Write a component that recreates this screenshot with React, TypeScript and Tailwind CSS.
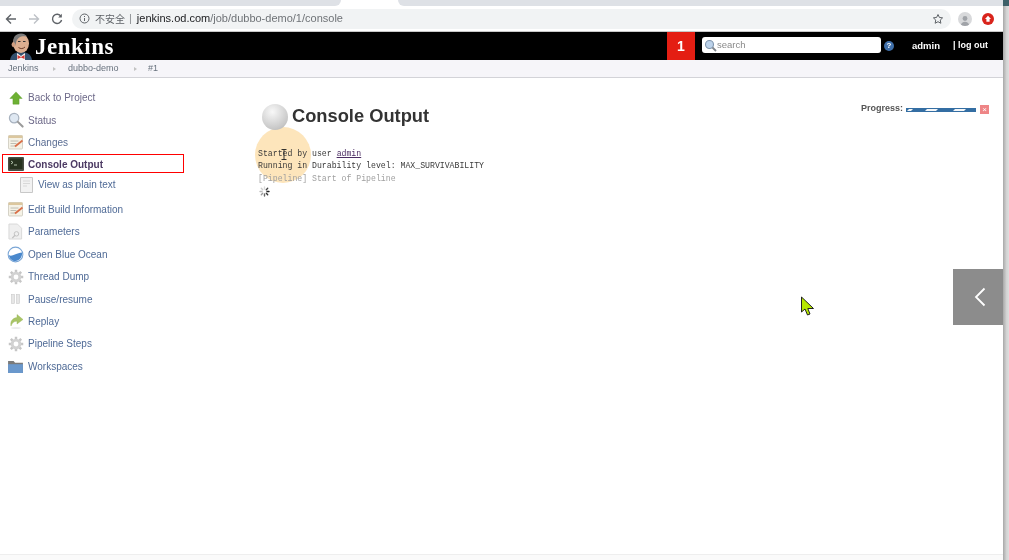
import React from "react";

const Arrow = () => (
  <svg width="14" height="14" viewBox="0 0 16 16"><path d="M8 1 L15 8.5 H11.5 V15 H4.5 V8.5 H1 Z" fill="#6db033" stroke="#5a9a28" strokeWidth="0.5" /></svg>
);
const Search = () => (
  <svg width="16" height="16" viewBox="0 0 17 17"><circle cx="6.5" cy="6.5" r="5" fill="#dfe8f2" stroke="#a8b2bf" strokeWidth="1.3" /><path d="M10.5 10.5 L15.5 15.5" stroke="#9a9a9a" strokeWidth="2.2" strokeLinecap="round" /></svg>
);
const Notepad = () => (
  <svg width="16" height="16" viewBox="0 0 16 16"><rect x="0.5" y="1.5" width="14" height="13.5" rx="1" fill="#f5f2e6" stroke="#c4c1b5" strokeWidth="0.7" /><rect x="0.5" y="1.5" width="14" height="2.5" fill="#dcc79e" /><path d="M2.5 7h8M2.5 9.5h6M2.5 12h5" stroke="#b0b0a6" strokeWidth="0.8" /><path d="M7 12.5 L14.5 6.5" stroke="#d96f48" strokeWidth="1.8" /></svg>
);
const Terminal = () => (
  <svg width="16" height="14" viewBox="0 0 16 14"><rect x="0" y="0" width="16" height="14" rx="1" fill="#4a4e44" /><rect x="1.5" y="1.5" width="13" height="10.5" fill="#27321f" /><path d="M3 4l2 1.5L3 7M6 8h3" stroke="#d8e8d0" strokeWidth="0.8" fill="none" /></svg>
);
const Doc = () => (
  <svg width="13" height="16" viewBox="0 0 13 16"><path d="M0.5 0.5 H12.5 V15.5 H0.5 Z" fill="#f2f2f2" stroke="#c8c8c8" /><path d="M3 4h7M3 6.5h7M3 9h4" stroke="#d8d8d8" strokeWidth="1" /></svg>
);
const Params = () => (
  <svg width="15" height="17" viewBox="0 0 16 17"><path d="M1 0.5 H10 L14.5 5 V16.5 H1 Z" fill="#efefef" stroke="#d8d8d8" /><circle cx="9" cy="11" r="2.4" fill="none" stroke="#c0c0c0" strokeWidth="1" /><path d="M7.5 12.5 L4.5 15.5" stroke="#c0c0c0" strokeWidth="1.3" /></svg>
);
const Ocean = () => (
  <svg className="-ml-[1px]" width="17" height="17" viewBox="0 0 18 18"><circle cx="9" cy="9" r="7.8" fill="#fff" stroke="#7aa6d6" strokeWidth="1.1" /><path d="M2 9.5 C5 12 9 7.5 16 7 C16.4 12 13 16 9 16 C5 16 2.4 13 2 9.5 Z" fill="#4a88cc" /></svg>
);
const Gear = () => (
  <svg width="16" height="16" viewBox="0 0 17 17"><g stroke="#c6c6c6" strokeWidth="2.6"><path d="M8.5 0.8V16.2M0.8 8.5H16.2M3 3L14 14M14 3L3 14" /></g><circle cx="8.5" cy="8.5" r="5.6" fill="#d2d2d2" /><circle cx="8.5" cy="8.5" r="2.6" fill="#fff" /></svg>
);
const Pause = () => (
  <svg width="16" height="16" viewBox="0 0 16 16"><rect x="3.5" y="3.5" width="3" height="9" fill="#e6e6e6" stroke="#cacaca" strokeWidth="0.6" /><rect x="8.5" y="3.5" width="3" height="9" fill="#e6e6e6" stroke="#cacaca" strokeWidth="0.6" /></svg>
);
const Replay = () => (
  <svg width="16" height="16" viewBox="0 0 16 16"><path d="M9 1.5 L15 6.5 L9 11 V8.2 C6 8 4 10 3 13 C2 8.5 4.5 5 9 4.6 Z" fill="#a9c566" stroke="#98b259" strokeWidth="0.4" /><ellipse cx="8" cy="15" rx="5" ry="0.8" fill="#e6e6e6" /></svg>
);
const Folder = () => (
  <svg width="15" height="13" viewBox="0 0 16 14"><path d="M0 1 H6 L7.5 3 H16 V14 H0 Z" fill="#7a7a7a" /><path d="M0 4.5 H16 V14 H0 Z" fill="#6a98cc" /></svg>
);

type Item = { label: string; icon: React.ReactNode; cls: string; text: string };
const items: Item[] = [
  { label: "Back to Project", icon: <span className="pl-[1px]"><Arrow /></span>, cls: "h-[23px]", text: "text-[#6c6888]" },
  { label: "Status", icon: <Search />, cls: "h-[22px]", text: "text-[#6c6888]" },
  { label: "Changes", icon: <Notepad />, cls: "h-[22px]", text: "text-[#596c92]" },
];
const itemsB: Item[] = [
  { label: "Edit Build Information", icon: <Notepad />, cls: "h-[22px]", text: "text-[#4f6a96]" },
  { label: "Parameters", icon: <Params />, cls: "h-[23px]", text: "text-[#4f6a96]" },
  { label: "Open Blue Ocean", icon: <Ocean />, cls: "h-[22px]", text: "text-[#4f6a96]" },
  { label: "Thread Dump", icon: <Gear />, cls: "h-[23px]", text: "text-[#4f6a96]" },
  { label: "Pause/resume", icon: <Pause />, cls: "h-[22px]", text: "text-[#4f6a96]" },
  { label: "Replay", icon: <Replay />, cls: "h-[22px]", text: "text-[#4f6a96]" },
  { label: "Pipeline Steps", icon: <Gear />, cls: "h-[23px]", text: "text-[#4f6a96]" },
  { label: "Workspaces", icon: <Folder />, cls: "h-[22px]", text: "text-[#4f6a96]" },
];

function Row({ it }: { it: Item }) {
  return (
    <div className={`flex items-center pl-[8px] ${it.cls}`}>
      <span className="flex w-[20px] shrink-0 items-center justify-start">{it.icon}</span>
      <span className={`text-[10px] ${it.text}`}>{it.label}</span>
    </div>
  );
}

const Butler = () => (
  <svg width="24" height="28" viewBox="0 0 24 28">
    <path d="M1 28 C2 22 6 20 12 20 C18 20 22 22 23 28 Z" fill="#33506e" />
    <path d="M8 21 L12 24 L16 21 L16 28 L8 28 Z" fill="#f3f3f3" />
    <path d="M8.5 23 L12 25 L15.5 23 L15.5 27 L12 25.5 L8.5 27 Z" fill="#d33833" />
    <ellipse cx="12" cy="11.5" rx="8" ry="9.5" fill="#dcae90" />
    <path d="M4.5 11 C3.5 5 7 1.5 12 1.5 C15 1.5 17 3 18 4.5 C13 3.5 8 5 7 11 L6 14 Z" fill="#7a7a7a" />
    <ellipse cx="4.4" cy="12.5" rx="1.8" ry="2.6" fill="#cf9d80" />
    <path d="M9 9.5h2.5M14 9.5h2.5" stroke="#333" strokeWidth="1.1" />
    <path d="M9.5 15.5 C11.5 17 14 17 16 15" stroke="#6d3f2c" strokeWidth="1" fill="none" />
  </svg>
);

export default function App() {
  return (
    <div className="relative flex h-[560px] w-[1009px] overflow-hidden bg-white font-['Liberation_Sans',Arial,sans-serif] blur-[0.35px]">
      <div className="flex h-full w-[1003px] shrink-0 flex-col">
        {/* tab strip */}
        <div className="flex h-[6px] shrink-0 bg-white">
          <div className="h-full w-[341px] rounded-br-[6px] bg-[#dee1e6]" />
          <div className="h-full w-[57px]" />
          <div className="h-full flex-1 rounded-bl-[6px] bg-[#dee1e6]" />
        </div>
        {/* toolbar */}
        <div className="flex h-[26px] shrink-0 items-center border-b border-[#c8c8c8] bg-white">
          <svg className="ml-[5px]" width="12" height="12" viewBox="0 0 12 12"><path d="M11 6H1.5M6 1.5L1.5 6L6 10.5" stroke="#5f6368" strokeWidth="1.4" fill="none" /></svg>
          <svg className="ml-[11px]" width="12" height="12" viewBox="0 0 12 12"><path d="M1 6H10.5M6 1.5L10.5 6L6 10.5" stroke="#bdc1c6" strokeWidth="1.4" fill="none" /></svg>
          <svg className="ml-[11px]" width="12" height="12" viewBox="0 0 12 12"><path d="M10 3.4A4.6 4.6 0 1 0 10.6 7" stroke="#5f6368" strokeWidth="1.4" fill="none" /><path d="M10.8 0.8V4.4H7.2Z" fill="#5f6368" /></svg>
          <div className="ml-[9px] flex h-[20px] w-[879px] items-center rounded-full bg-[#f1f3f4] pl-[7px] pr-[7px]">
            <svg width="11" height="11" viewBox="0 0 11 11"><circle cx="5.5" cy="5.5" r="4.5" fill="none" stroke="#5f6368" strokeWidth="1" /><path d="M5.5 5v3M5.5 3v1" stroke="#5f6368" strokeWidth="1" /></svg>
            <span className="ml-[5px] font-['Noto_Sans_CJK_SC',sans-serif] text-[10px] text-[#5f6368]">不安全</span>
            <span className="ml-[4px] text-[11px] text-[#8a8d91]">|</span>
            <span className="ml-[5px] text-[11px] text-[#202124]">jenkins.od.com<span className="text-[#6f7377]">/job/dubbo-demo/1/console</span></span>
            <svg className="ml-auto" width="12" height="12" viewBox="0 0 24 24"><path d="M12 3l2.8 5.9 6.4.8-4.7 4.4 1.2 6.4L12 17.4l-5.7 3.1 1.2-6.4L2.8 9.7l6.4-.8z" fill="none" stroke="#5f6368" strokeWidth="2" /></svg>
          </div>
          <div className="ml-[7px] flex h-[14px] w-[14px] items-end justify-center overflow-hidden rounded-full bg-[#d8d9db]">
            <svg width="12" height="12" viewBox="0 0 12 12"><circle cx="6" cy="4.5" r="2.4" fill="#a0a3a8" /><path d="M1.5 12C2 8.8 4 7.8 6 7.8S10 8.8 10.5 12Z" fill="#a0a3a8" /></svg>
          </div>
          <svg className="ml-[10px]" width="12" height="12" viewBox="0 0 12 12"><circle cx="6" cy="6" r="6" fill="#d9241c" /><path d="M6 2.8L9 6H7.6V8.8H4.4V6H3Z" fill="#fff" /></svg>
        </div>
        {/* jenkins header */}
        <div className="flex h-[28px] shrink-0 items-center bg-black">
          <div className="ml-[9px] h-[28px] w-[24px] shrink-0"><Butler /></div>
          <span className="ml-[2px] font-['Liberation_Serif',serif] text-[23px] leading-none font-bold tracking-[0.5px] text-white">Jenkins</span>
          <div className="ml-auto flex h-full w-[28px] items-center justify-center bg-[#e41e13] text-[14px] font-bold text-white">1</div>
          <div className="mb-[2px] ml-[7px] flex h-[16px] w-[179px] items-center rounded-[3px] bg-white pl-[2px]">
            <svg width="13" height="13" viewBox="0 0 13 13"><circle cx="5.5" cy="5.5" r="4" fill="#bcd2ea" stroke="#7f95ad" strokeWidth="1.1" /><path d="M8.5 8.5L12 12" stroke="#80858c" strokeWidth="1.8" /></svg>
            <span className="text-[9.5px] text-[#8a8a8a]">search</span>
          </div>
          <div className="ml-[3px] flex h-[10px] w-[10px] items-center justify-center rounded-full bg-[#3f6fa9] text-[8px] leading-none font-bold text-white">?</div>
          <span className="ml-[18px] text-[9.5px] font-bold text-white">admin</span>
          <span className="mr-[15px] ml-[13px] text-[9px] font-bold text-white">| log out</span>
        </div>
        {/* breadcrumb */}
        <div className="flex h-[18px] shrink-0 items-center border-b border-[#d3d3d8] bg-[#f6f5f9] pl-[8px] text-[9px] text-[#68727e]">
          <span className="w-[30px]">Jenkins</span>
          <span className="ml-[15px] h-0 w-0 border-y-[2.5px] border-l-[3px] border-y-transparent border-l-[#c2c2c2]" />
          <span className="ml-[12px] w-[51px]">dubbo-demo</span>
          <span className="ml-[15px] h-0 w-0 border-y-[2.5px] border-l-[3px] border-y-transparent border-l-[#c2c2c2]" />
          <span className="ml-[11px]">#1</span>
        </div>
        {/* body */}
        <div className="relative flex flex-1">
          <aside className="w-[258px] shrink-0 pt-[8px]">
            {items.map((it) => <Row key={it.label} it={it} />)}
            <div className="mt-[1px] ml-[2px] flex h-[19px] w-[182px] items-center border border-solid border-[#ff0000] pl-[5px]">
              <span className="flex w-[20px] shrink-0"><Terminal /></span>
              <span className="pt-[1px] text-[10px] font-bold text-[#4c3a63]">Console Output</span>
            </div>
            <div className="flex h-[23px] items-center pl-[20px]">
              <span className="flex w-[18px] shrink-0"><Doc /></span>
              <span className="text-[10px] text-[#4f6a96]">View as plain text</span>
            </div>
            <div className="h-[2px]" />
            {itemsB.map((it) => <Row key={it.label} it={it} />)}
          </aside>
          <main className="relative flex-1 pt-[26px]">
            <div className="flex items-start pr-[14px]">
              <div className="relative z-10 ml-[4px] h-[26px] w-[26px] shrink-0 rounded-full bg-[radial-gradient(circle_at_40%_30%,#f8f8f8,#c8c8c8_70%,#a8a8a8)]" />
              <h1 className="relative z-10 ml-[4px] text-[18.3px] leading-[24px] font-bold text-[#333]">Console Output</h1>
              <div className="ml-auto flex h-[11px] items-center">
                <span className="-mt-[3px] text-[9px] leading-[10px] font-bold text-[#555]">Progress:</span>
                <svg className="ml-[3px]" width="70" height="4" viewBox="0 0 70 4"><rect width="70" height="4" fill="#346ea3" /><path d="M1 3L3 1H7L5 3ZM19 3L21 1H32L30 3ZM47 3L49 1H60L58 3Z" fill="#f4f6f8" /></svg>
                <div className="ml-[4px] flex h-[9px] w-[9px] items-center justify-center bg-[#ee8586] text-[8px] leading-none text-white">×</div>
              </div>
            </div>
            <pre className="relative z-10 mt-[17.5px] font-['Liberation_Mono',monospace] text-[8.2px] leading-[12.5px] text-[#3a3a3a]">
              Started by user <span className="text-[#4c2d63] underline">admin</span>{"\n"}Running in Durability level: MAX_SURVIVABILITY{"\n"}<span className="text-[#a0a0a0]">[Pipeline] Start of Pipeline</span>
            </pre>
            <svg className="relative z-10 mt-[1px] ml-[1px]" width="11" height="11" viewBox="0 0 11 11">
              <g strokeWidth="1.4" strokeLinecap="round">
                <path d="M5.5 1v2" stroke="#d8d8d8" />
                <path d="M8.7 2.3L7.3 3.7" stroke="#444" />
                <path d="M10 5.5H8" stroke="#222" />
                <path d="M8.7 8.7L7.3 7.3" stroke="#333" />
                <path d="M5.5 10V8" stroke="#666" />
                <path d="M2.3 8.7L3.7 7.3" stroke="#999" />
                <path d="M1 5.5h2" stroke="#bbb" />
                <path d="M2.3 2.3L3.7 3.7" stroke="#ccc" />
              </g>
            </svg>
            {/* click highlight */}
            <div className="absolute top-[49px] left-[-3px] h-[56px] w-[56px] rounded-full bg-[#fde5bb]" />
            <svg className="absolute top-[71px] left-[23px] z-20" width="6" height="11" viewBox="0 0 6 11"><path d="M0.5 0.5h5M3 0.5v10M0.5 10.5h5" stroke="#222" strokeWidth="0.9" fill="none" /></svg>
          </main>
          {/* bottom rule */}
          <div className="absolute right-0 bottom-0 left-0 h-[6px] border-t border-[#eeeeee] bg-[#fafafa]" />
        </div>
      </div>
      {/* right edge */}
      <div className="flex h-full w-[6px] shrink-0 flex-col bg-[linear-gradient(90deg,#a8a8a8,#d4d4d4_60%,#dedede)]">
        <div className="h-[6px] bg-[#3d6068]" />
      </div>
      {/* slider tab */}
      <div className="absolute top-[269px] left-[953px] flex h-[56px] w-[50px] items-center justify-center bg-[#8c8c8c] pl-[3px]">
        <svg width="12" height="20" viewBox="0 0 12 20"><path d="M10.5 1.5L2 10L10.5 18.5" stroke="#fff" strokeWidth="1.8" fill="none" /></svg>
      </div>
      {/* mouse pointer */}
      <svg className="absolute top-[296px] left-[800px]" width="15" height="20" viewBox="0 0 15 20">
        <path d="M1.5 1 L1.5 16 L5 13 L7.5 19 L10 18 L7.8 12.5 L13.5 12.5 Z" fill="#b6e800" stroke="#222" strokeWidth="1" />
      </svg>
    </div>
  );
}
